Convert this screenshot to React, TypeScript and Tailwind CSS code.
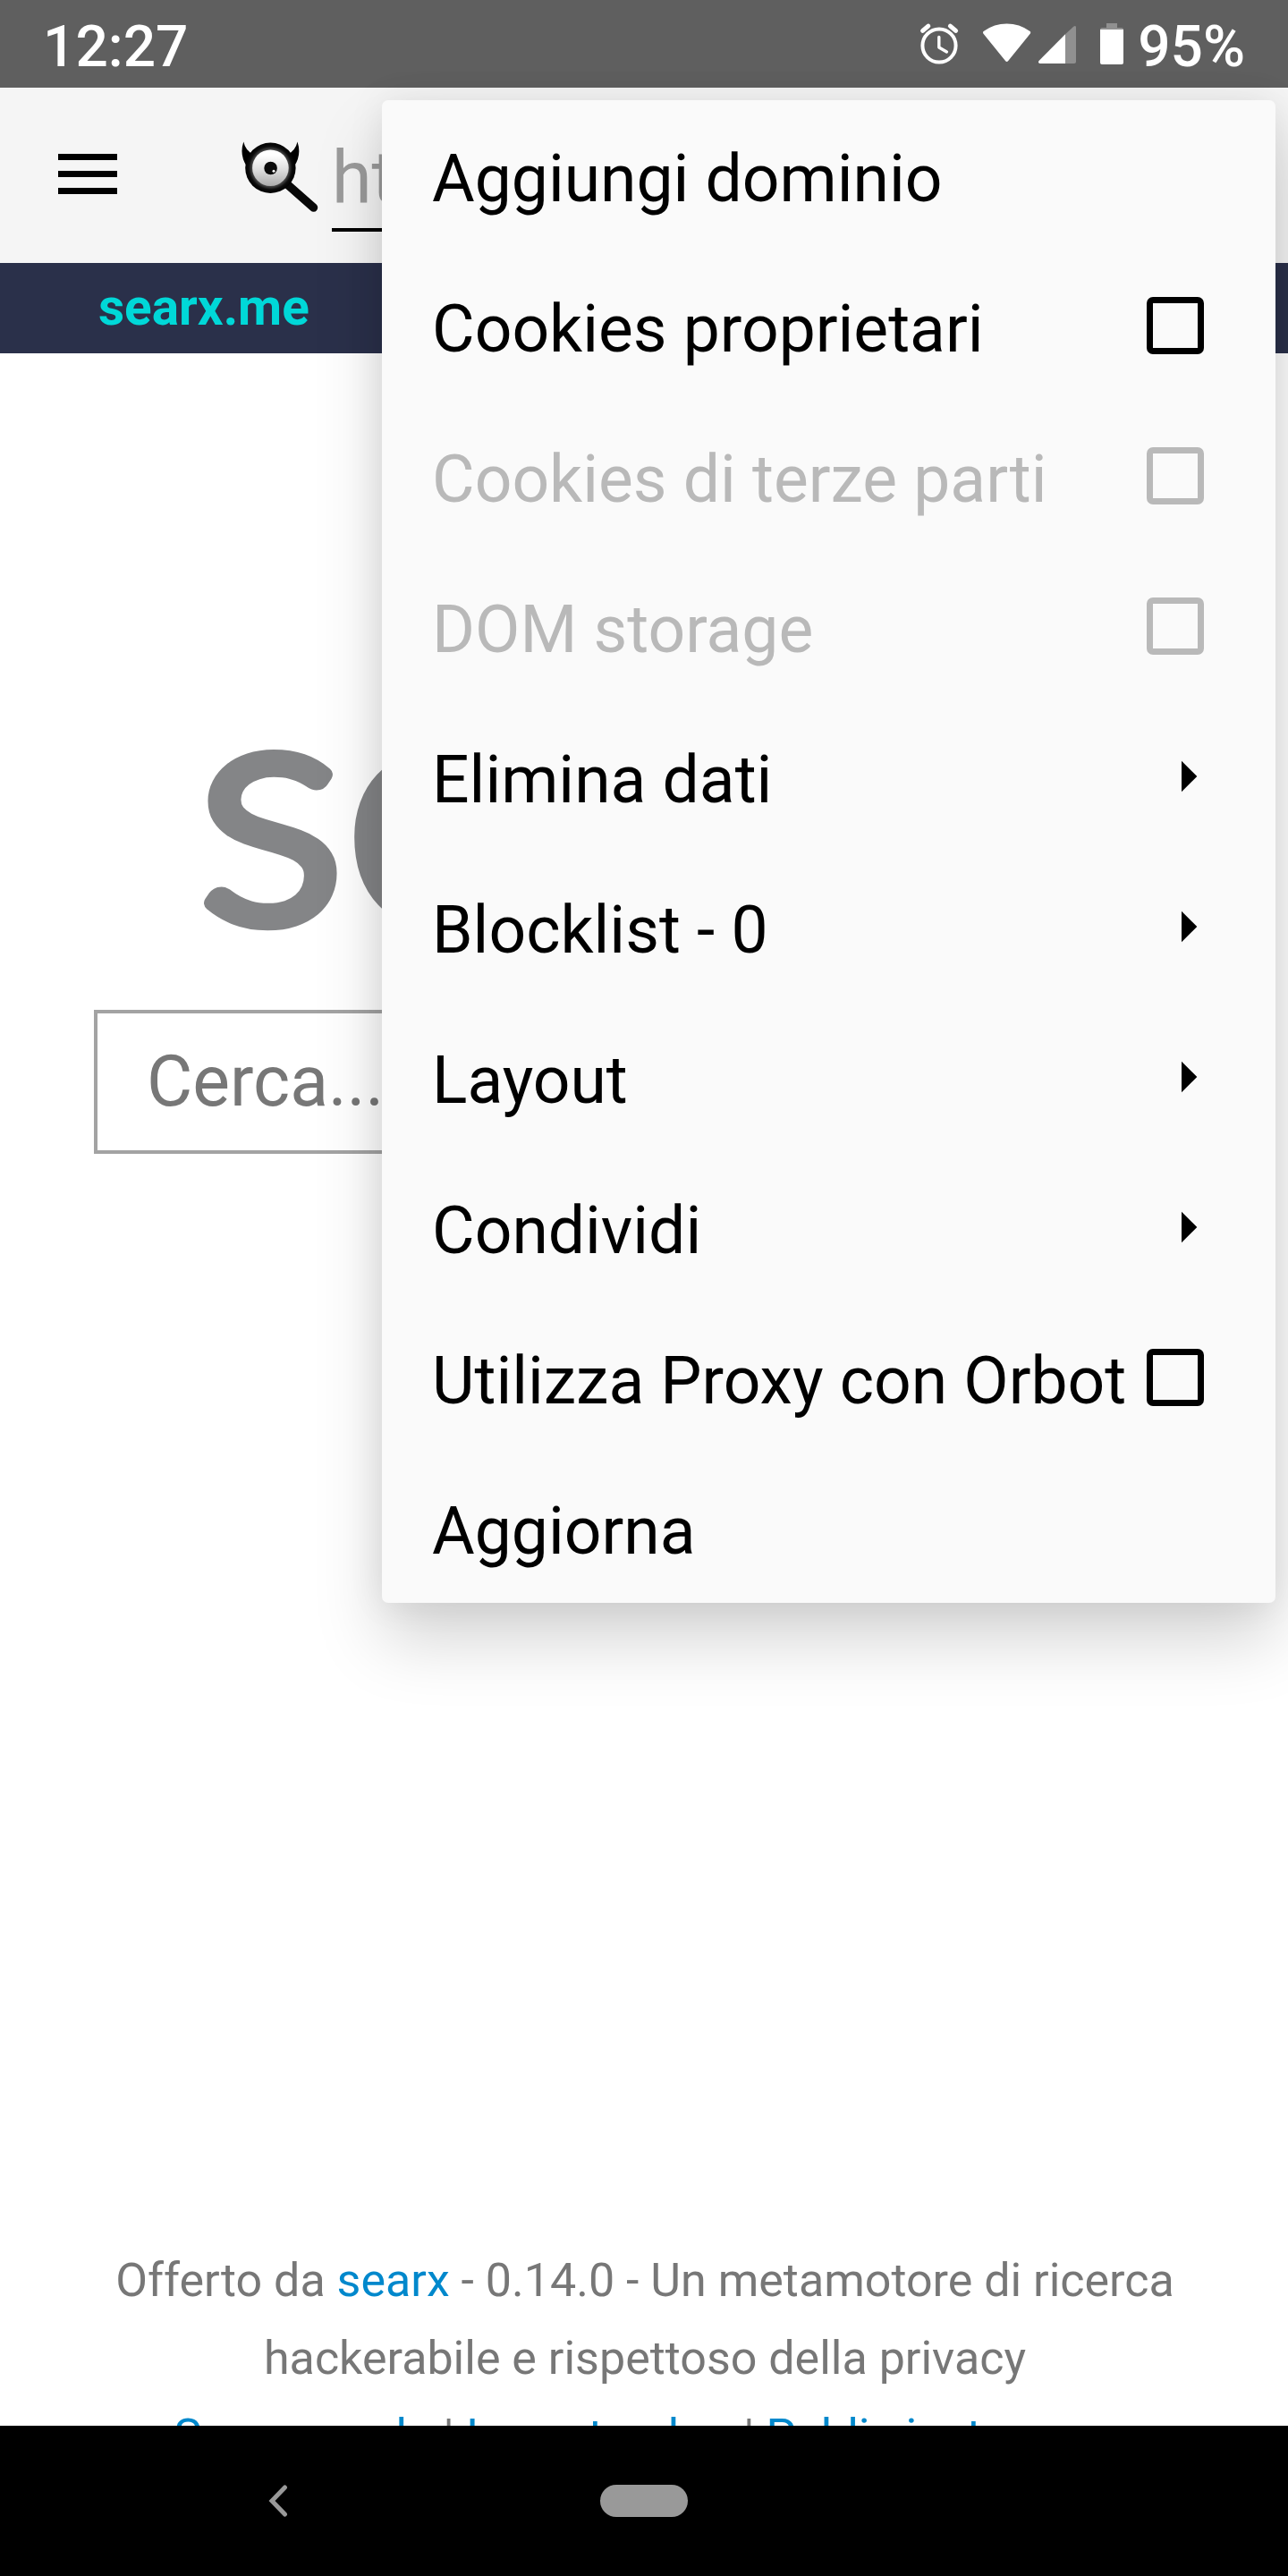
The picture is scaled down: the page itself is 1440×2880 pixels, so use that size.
import React from "react";

type Item = { label: string; kind?: "check" | "sub"; disabled?: boolean };

const items: Item[] = [
  { label: "Aggiungi dominio" },
  { label: "Cookies proprietari", kind: "check" },
  { label: "Cookies di terze parti", kind: "check", disabled: true },
  { label: "DOM storage", kind: "check", disabled: true },
  { label: "Elimina dati", kind: "sub" },
  { label: "Blocklist - 0", kind: "sub" },
  { label: "Layout", kind: "sub" },
  { label: "Condividi", kind: "sub" },
  { label: "Utilizza Proxy con Orbot", kind: "check" },
  { label: "Aggiorna" },
];

function StatusBar() {
  return (
    <header className="flex h-[98px] shrink-0 items-center justify-between bg-[#5f5f5f] pt-[6px] pr-[48px] pl-[48px] text-[64px] leading-[92px] font-medium text-white">
      <span className="pt-[2px]">12:27</span>
      <div className="flex items-center">
        <svg width="246" height="92" viewBox="1026 6 246 92" fill="none">
          <circle cx="1050" cy="51" r="18.6" stroke="#fff" strokeWidth="4" />
          <path d="M1049.8 41.5V53l8.6 5" stroke="#fff" strokeWidth="3.4" strokeLinecap="round" strokeLinejoin="round" />
          <path d="M1031.6 34.4l6.2-5.2M1068.6 34.4l-6.2-5.2" stroke="#fff" strokeWidth="5" strokeLinecap="round" />
          <path d="M1099.6 35q12-8.4 26-8.4t26 8.4q1.2 1 .3 2.4L1127.2 68q-1.6 1.8-3.200 0L1099.3 37.4q-.9-1.4.3-2.4z" fill="#fff" />
          <path d="M1191 38.3L1200.5 29.500q2.500-1.500 2.500 1V69q0 2-2 2h-10z" fill="#909090" />
          <path d="M1191 38.2V71h-28.500q-2.500-.8-1-3z" fill="#fff" />
          <path d="M1237 26h12v5h5q2 0 2 2h-26q0-2 2-2h5z" fill="#909090" />
          <path d="M1230 33h26v37q0 2-2 2h-22q-2 0-2-2z" fill="#fff" />
        </svg>
        <span className="pt-[2px]">95%</span>
      </div>
    </header>
  );
}

function SearxIcon() {
  return (
    <svg width="90" height="84" viewBox="268 156 90 84" className="shrink-0">
      <defs>
        <linearGradient id="eye" x1="0" y1="0" x2="0" y2="1">
          <stop offset="0.15" stopColor="#fff" />
          <stop offset="0.55" stopColor="#dedede" />
          <stop offset="1" stopColor="#ababab" />
        </linearGradient>
        <radialGradient id="ring">
          <stop offset="0.72" stopColor="#4a4a4a" />
          <stop offset="0.86" stopColor="#0c0c0c" />
          <stop offset="1" stopColor="#000" />
        </radialGradient>
      </defs>
      <path d="M321 206l29.500 26" stroke="#080808" strokeWidth="9.500" strokeLinecap="round" />
      <path d="M272.300 158.500q-5 14.500 3.700 27.500l8-13q-9.500-4-11.700-14.500zM332.500 158.500q5 14.500-3.700 27.500l-8-13q9.500-4 11.700-14.500z" fill="#000" />
      <circle cx="302.400" cy="187.700" r="28.200" fill="url(#ring)" />
      <circle cx="302.400" cy="187.700" r="20.300" fill="url(#eye)" />
      <circle cx="302.600" cy="188" r="7.300" fill="#0a0a0a" />
      <circle cx="306" cy="191.200" r="1.500" fill="#fff" />
    </svg>
  );
}

function Toolbar() {
  return (
    <div className="flex h-[196px] shrink-0 bg-[#f5f5f5]">
      <div className="mt-[74px] ml-[65px] flex w-[66px] shrink-0 flex-col gap-[12px]">
        <div className="h-[7px] bg-black" />
        <div className="h-[7px] bg-black" />
        <div className="h-[7px] bg-black" />
      </div>
      <div className="mt-[58px] ml-[137px]">
        <SearxIcon />
      </div>
      <div className="mt-[46px] ml-[13px] h-[115px] w-[700px] border-b-4 border-black text-[81px] leading-[109px] text-[#9b9b9b]">
        ht
      </div>
    </div>
  );
}

function Page() {
  return (
    <main className="flex h-[2418px] shrink-0 flex-col overflow-hidden bg-white">
      <div className="h-[101px] shrink-0 bg-[#2a304a] pl-[110px] text-[56.7px] leading-[99px] font-bold text-[#00d8d8]">
        searx.me
      </div>
      <svg width="400" height="300" viewBox="0 0 400 300" className="mt-[385px] ml-[200px] shrink-0">
        <text
          x="19 172"
          y="248.400"
          transform="scale(1.08 1)"
          fontFamily="Lato"
          fontWeight="300"
          fontSize="359"
          fill="#848587"
          stroke="#848587"
          strokeWidth="18"
          strokeLinejoin="round"
        >
          se
        </text>
      </svg>
      <div className="mt-[49px] ml-[105px] h-[161px] w-[1230px] shrink-0 border-4 border-[#a3a3a3] pl-[55px] text-[78.75px] leading-[152px] text-[#777777]">
        Cerca...
      </div>
      <footer className="mt-[1216px] shrink-0 text-center text-[52px] leading-[87px] text-[#777777]">
        <p className="pl-[2px]">
          Offerto da <a className="text-[#0088cc]">searx</a> - 0.14.0 - Un metamotore di ricerca
          <br />
          hackerabile e rispettoso della privacy
        </p>
        <p className="pr-[9px]">
          <a className="text-[#0088cc]">Source code</a> | <a className="text-[#0088cc]">Issue tracker</a> |{" "}
          <a className="text-[#0088cc]">Public instances</a>
        </p>
      </footer>
    </main>
  );
}

function MenuRow({ item }: { item: Item }) {
  return (
    <li className={`flex h-[168px] items-center justify-between pl-[56px] ${item.disabled ? "text-[#b9b9b9]" : "text-black"}`}>
      <span className="pt-[8px] text-[73.2px] leading-[100px] whitespace-nowrap">{item.label}</span>
      {item.kind === "check" && <span className="mr-[80px] size-[64px] shrink-0 rounded-[7px] border-[7px] border-current" />}
      {item.kind === "sub" && (
        <svg width="18" height="36" viewBox="0 0 18 36" className="mr-[87px]">
          <path d="M0 .7L17.300 18 0 35.300z" fill="#000" />
        </svg>
      )}
    </li>
  );
}

export default function App() {
  return (
    <div className="relative flex h-[2880px] w-[1440px] flex-col overflow-hidden bg-white font-['Roboto',sans-serif]">
      <StatusBar />
      <Toolbar />
      <Page />
      <ul className="absolute top-[112px] left-[427px] w-[999px] rounded-[7px] bg-[#fafafa] shadow-[0_42px_76px_rgba(0,0,0,0.17),0_0_40px_rgba(0,0,0,0.08)]">
        {items.map((item) => (
          <MenuRow key={item.label} item={item} />
        ))}
      </ul>
      <nav className="flex h-[168px] shrink-0 items-center bg-black">
        <svg width="22" height="36" viewBox="0 0 22 36" className="ml-[300px]">
          <path d="M18.500 3L4 18l14.500 15" fill="none" stroke="#999" strokeWidth="5" strokeLinecap="round" />
        </svg>
        <div className="ml-[349px] h-[36px] w-[98px] rounded-full bg-[#999999]" />
      </nav>
    </div>
  );
}
